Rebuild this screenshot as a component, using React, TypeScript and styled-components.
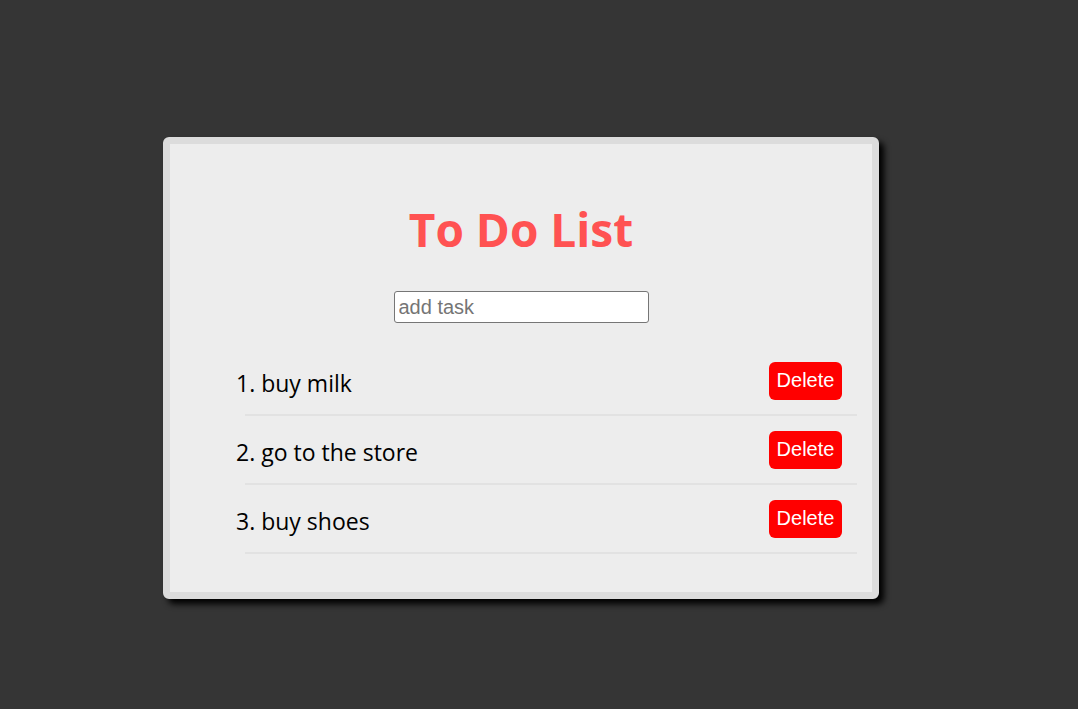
import React from "react";
import styled, { createGlobalStyle } from "styled-components";

const Global = createGlobalStyle`
  html, body { margin: 0; padding: 0; background: #353535; }
  body { font-family: "Open Sans", "Noto Sans", sans-serif; }
`;

const Page = styled.div`
  min-height: 709px;
  box-sizing: border-box;
  padding: 137px 0 0 163px;
  display: flex;
  align-items: flex-start;
`;

const Card = styled.div`
  width: 702px;
  height: 448px;
  background: #ededed;
  border: 7px solid #dcdcdc;
  border-radius: 6px;
  box-shadow: 5px 5px 6px #000;
  display: flex;
  flex-direction: column;
  align-items: center;
`;

const Title = styled.h1`
  margin: 52px 0 0;
  font-size: 46px;
  line-height: 66px;
  font-weight: 700;
  color: #ff5252;
`;

const Input = styled.input`
  margin-top: 29px;
  width: 255px;
  height: 32px;
  box-sizing: border-box;
  border: 1px solid #767676;
  border-radius: 3px;
  padding: 0 4px;
  font-family: "Liberation Sans", Arial, sans-serif;
  font-size: 20px;
  background: #fff;
  color: #000;
  &::placeholder { color: #757575; }
`;

const List = styled.ol`
  list-style: none;
  margin: 24px 0 0;
  padding: 0 15px 0 75px;
  width: 100%;
  box-sizing: border-box;
`;

const Item = styled.li`
  height: 67px;
  border-bottom: 2px solid #e2e2e2;
  display: flex;
  align-items: center;
  justify-content: space-between;
  padding-right: 15px;
`;

const Label = styled.span`
  margin-left: -9px;
  margin-top: 5px;
  font-size: 23px;
  color: #000;
`;

const DeleteButton = styled.button`
  width: 73px;
  height: 38px;
  border: none;
  border-radius: 6px;
  background: #ff0000;
  color: #fff;
  font-family: "Liberation Sans", Arial, sans-serif;
  font-size: 20px;
  padding: 0;
  cursor: pointer;
`;

const tasks = ["buy milk", "go to the store", "buy shoes"];

export default function App() {
  return (
    <>
      <Global />
      <Page>
        <Card>
          <Title>To Do List</Title>
          <Input placeholder="add task" />
          <List>
            {tasks.map((t, i) => (
              <Item key={t}>
                <Label>
                  {i + 1}. {t}
                </Label>
                <DeleteButton>Delete</DeleteButton>
              </Item>
            ))}
          </List>
        </Card>
      </Page>
    </>
  );
}
